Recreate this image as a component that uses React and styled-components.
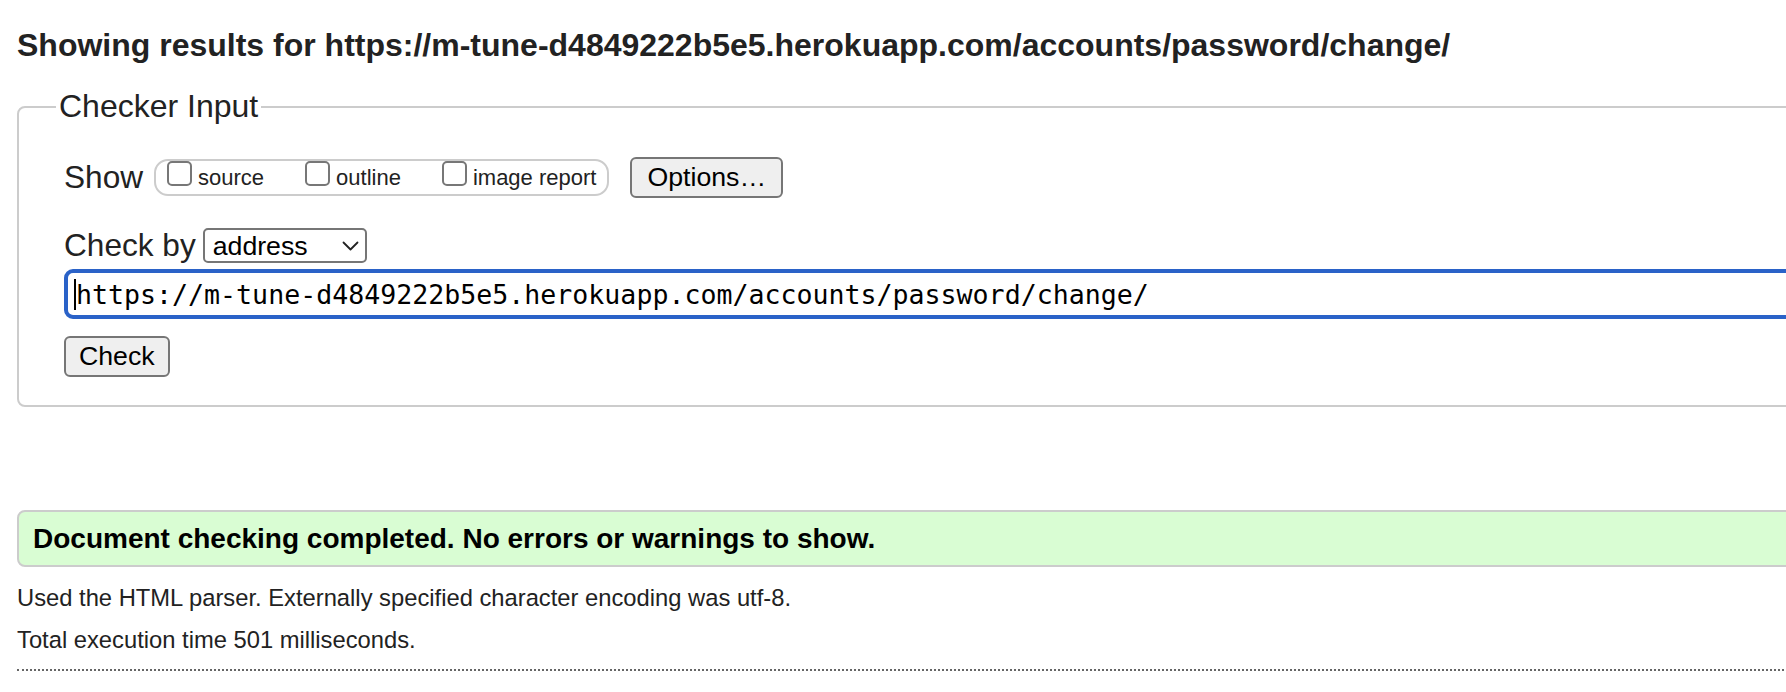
import React from 'react';
import styled, { createGlobalStyle } from 'styled-components';

const Global = createGlobalStyle`
  html, body { margin: 0; padding: 0; background: #fff; overflow: hidden; }
  body { font-family: "Liberation Sans", Arial, Helvetica, sans-serif; color: #222; }
  * { box-sizing: border-box; }
`;

const Page = styled.main`
  width: 1960px;
  padding: 27px 0 0 17px;
`;

const Heading = styled.h2`
  margin: 0;
  font-size: 32px;
  font-weight: bold;
  line-height: 37px;
  color: #222;
  white-space: nowrap;
`;

const Fieldset = styled.fieldset`
  margin: 24px 0 0 0;
  border: 2px solid #ccc;
  border-radius: 8px;
  padding: 32px 0 28px 45px;
  min-width: 0;
`;

const Legend = styled.legend`
  font-size: 32px;
  line-height: 37px;
  padding: 0 3px;
  margin-left: -8px;
  color: #222;
`;

const Row = styled.div`
  display: flex;
  align-items: center;
  margin-top: ${(p) => p.$mt || 0}px;
`;

const Label = styled.span`
  font-size: 31.6px;
  line-height: 37px;
  color: #222;
  white-space: nowrap;
`;

const OptionGroup = styled.div`
  display: flex;
  align-items: flex-start;
  gap: 41px;
  height: 37px;
  border: 2px solid #ccc;
  border-radius: 14px;
  margin-left: 11px;
  padding: 0 11px;
`;

const Option = styled.label`
  display: flex;
  align-items: flex-end;
  gap: 6px;
  height: 25px;
`;

const Checkbox = styled.input.attrs({ type: 'checkbox' })`
  appearance: none;
  margin: 0;
  width: 25px;
  height: 25px;
  border: 2px solid #777;
  border-radius: 5px;
  background: #fff;
  flex: none;
`;

const OptionText = styled.span`
  font-size: 22px;
  line-height: 22px;
  margin-bottom: -3px;
  color: #222;
  white-space: nowrap;
`;

const Button = styled.button`
  height: 41px;
  padding: 0 ${(p) => p.$px || 13}px;
  margin-left: ${(p) => p.$ml || 0}px;
  border: 2px solid #767676;
  border-radius: 6px;
  background: #efefef;
  color: #000;
  font-family: "Liberation Sans", Arial, sans-serif;
  font-size: 26.7px;
  line-height: 1;
`;

const SelectWrap = styled.div`
  position: relative;
  margin-left: 7px;
  width: 164px;
  height: 35px;
`;

const Select = styled.select`
  appearance: none;
  width: 100%;
  height: 100%;
  border: 2px solid #767676;
  border-radius: 5px;
  background: #fff;
  padding: 0 0 0 8px;
  font-family: "Liberation Sans", Arial, sans-serif;
  font-size: 26.7px;
  color: #000;
`;

const Chevron = styled.svg`
  position: absolute;
  right: 8px;
  top: 13px;
  width: 17px;
  height: 10px;
  pointer-events: none;
`;

const InputBox = styled.div`
  display: flex;
  align-items: center;
  margin-top: 5px;
  width: 1860px;
  height: 50px;
  border: 4px solid #2a62c8;
  border-radius: 9px;
  background: #fff;
  padding-left: 6px;
`;

const Caret = styled.span`
  width: 2px;
  height: 31px;
  background: #000;
  flex: none;
`;

const UrlInput = styled.input`
  flex: 1;
  border: none;
  outline: none;
  padding: 0;
  margin: 0;
  background: transparent;
  font-family: "DejaVu Sans Mono", "Liberation Mono", monospace;
  font-size: 26.6px;
  color: #000;
`;

const CheckRow = styled.div`
  margin-top: 17px;
`;

const Success = styled.div`
  margin-top: 103px;
  height: 57px;
  border: 2px solid #ccc;
  border-radius: 8px;
  background: #d9fdd3;
  padding-left: 14px;
  font-size: 28px;
  font-weight: bold;
  line-height: 53px;
  color: #000;
  white-space: nowrap;
`;

const Info = styled.p`
  margin: ${(p) => p.$mt}px 0 0 0;
  font-size: 23.75px;
  line-height: 30px;
  color: #222;
  white-space: nowrap;
`;

const Divider = styled.hr`
  margin: 14px 0 0 0;
  border: none;
  border-top: 2px dotted #666;
  height: 0;
`;

export default function App() {
  const url = 'https://m-tune-d4849222b5e5.herokuapp.com/accounts/password/change/';
  return (
    <>
      <Global />
      <Page>
        <Heading>Showing results for {url}</Heading>
        <Fieldset>
          <Legend>Checker Input</Legend>
          <Row>
            <Label>Show</Label>
            <OptionGroup>
              <Option>
                <Checkbox />
                <OptionText>source</OptionText>
              </Option>
              <Option>
                <Checkbox />
                <OptionText>outline</OptionText>
              </Option>
              <Option>
                <Checkbox />
                <OptionText>image report</OptionText>
              </Option>
            </OptionGroup>
            <Button $ml={21} $px={15}>Options…</Button>
          </Row>
          <Row $mt={29}>
            <Label>Check by</Label>
            <SelectWrap>
              <Select defaultValue="address">
                <option value="address">address</option>
                <option value="file">file upload</option>
                <option value="text">text input</option>
              </Select>
              <Chevron viewBox="0 0 17 10" fill="none">
                <path d="M1.5 1.5 L8.5 8.5 L15.5 1.5" stroke="#222" strokeWidth="1.8" strokeLinecap="round" strokeLinejoin="round" />
              </Chevron>
            </SelectWrap>
          </Row>
          <InputBox>
            <Caret />
            <UrlInput readOnly value={url} />
          </InputBox>
          <CheckRow>
            <Button $px={13}>Check</Button>
          </CheckRow>
        </Fieldset>
        <Success>Document checking completed. No errors or warnings to show.</Success>
        <Info $mt={16}>Used the HTML parser. Externally specified character encoding was utf-8.</Info>
        <Info $mt={12}>Total execution time 501 milliseconds.</Info>
        <Divider />
      </Page>
    </>
  );
}
